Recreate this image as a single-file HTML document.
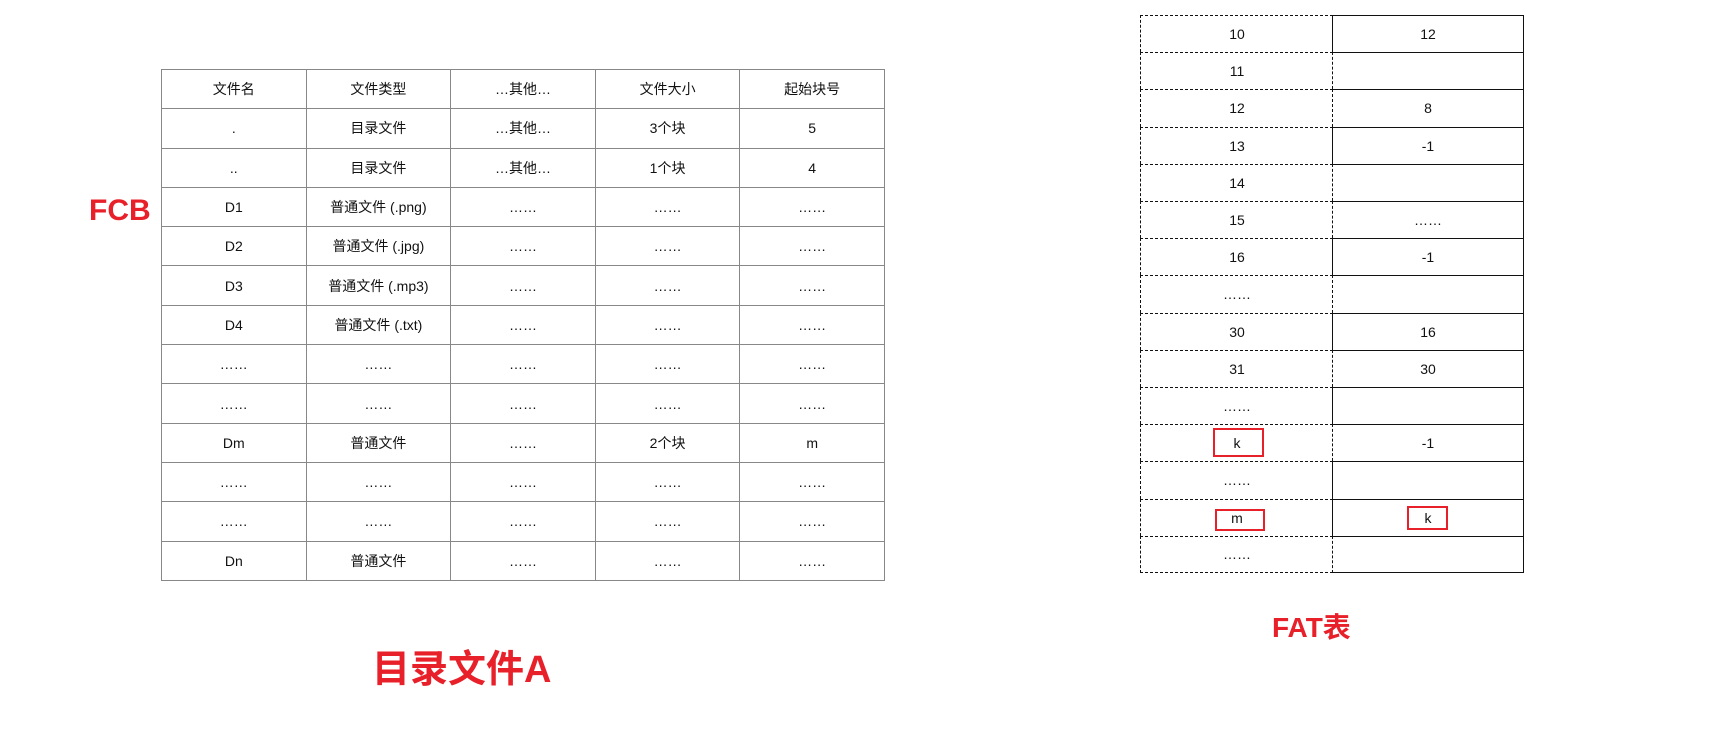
<!DOCTYPE html>
<html><head><meta charset="utf-8"><style>
body{margin:0;width:1710px;height:739px;background:#fff;position:relative;overflow:hidden;font-family:"Liberation Sans","Noto Sans CJK SC",sans-serif;color:#111}
table.a{position:absolute;left:161px;top:69px;border-collapse:collapse;font-size:14px}
table.a td{border:1px solid #888;width:143.6px;height:38.3px;padding:0;text-align:center}
.lbl{position:absolute;color:#e8202a;font-weight:bold;white-space:nowrap;line-height:1}
.c{position:absolute;height:37.2px;box-sizing:border-box;display:flex;align-items:center;justify-content:center;font-size:14px}
.r{position:absolute;border:2px solid #e8202a;box-sizing:border-box}
</style></head><body>
<div class="lbl" style="left:89px;top:196px;font-size:30px">FCB</div>
<div class="lbl" style="left:372px;top:651px;font-size:38px">目录文件A</div>
<div class="lbl" style="left:1272px;top:614px;font-size:28px">FAT表</div>
<table class="a">
<tr><td>文件名</td><td>文件类型</td><td>…其他…</td><td>文件大小</td><td>起始块号</td></tr>
<tr><td>.</td><td>目录文件</td><td>…其他…</td><td>3个块</td><td>5</td></tr>
<tr><td>..</td><td>目录文件</td><td>…其他…</td><td>1个块</td><td>4</td></tr>
<tr><td>D1</td><td>普通文件 (.png)</td><td>……</td><td>……</td><td>……</td></tr>
<tr><td>D2</td><td>普通文件 (.jpg)</td><td>……</td><td>……</td><td>……</td></tr>
<tr><td>D3</td><td>普通文件 (.mp3)</td><td>……</td><td>……</td><td>……</td></tr>
<tr><td>D4</td><td>普通文件 (.txt)</td><td>……</td><td>……</td><td>……</td></tr>
<tr><td>……</td><td>……</td><td>……</td><td>……</td><td>……</td></tr>
<tr><td>……</td><td>……</td><td>……</td><td>……</td><td>……</td></tr>
<tr><td>Dm</td><td>普通文件</td><td>……</td><td>2个块</td><td>m</td></tr>
<tr><td>……</td><td>……</td><td>……</td><td>……</td><td>……</td></tr>
<tr><td>……</td><td>……</td><td>……</td><td>……</td><td>……</td></tr>
<tr><td>Dn</td><td>普通文件</td><td>……</td><td>……</td><td>……</td></tr>
</table>
<div id="fat"></div>
<script>
(function(){
var L=["10","11","12","13","14","15","16","……","30","31","……","k","……","m","……"];
var R=["12","","8","-1","","……","-1","","16","30","","-1","","k",""];
var S=[1,0,0,1,0,0,1,0,1,0,1,0,1,1,0];
var h="",T0=15,rh=37.2;
for(var i=0;i<15;i++){var y=T0+i*rh;
h+='<div class="c" style="left:1140px;top:'+y+'px;width:193px;border-left:1.5px dashed #111;border-top:1.5px dashed #111;'+(i==14?'border-bottom:1.5px dashed #111;':'')+'">'+L[i]+'</div>';
h+='<div class="c" style="left:1332px;top:'+y+'px;width:192px;border-left:1.5px '+(S[i]?'solid':'dashed')+' #111;border-top:1.5px solid #111;border-right:1.5px solid #111;'+(i==14?'border-bottom:1.5px solid #111;':'')+'">'+R[i]+'</div>';}
document.getElementById("fat").innerHTML=h;
})();
</script>
<div class="r" style="left:1213px;top:428px;width:51px;height:29px"></div>
<div class="r" style="left:1215px;top:509px;width:50px;height:22px"></div>
<div class="r" style="left:1407px;top:506px;width:41px;height:24px"></div>
</body></html>
